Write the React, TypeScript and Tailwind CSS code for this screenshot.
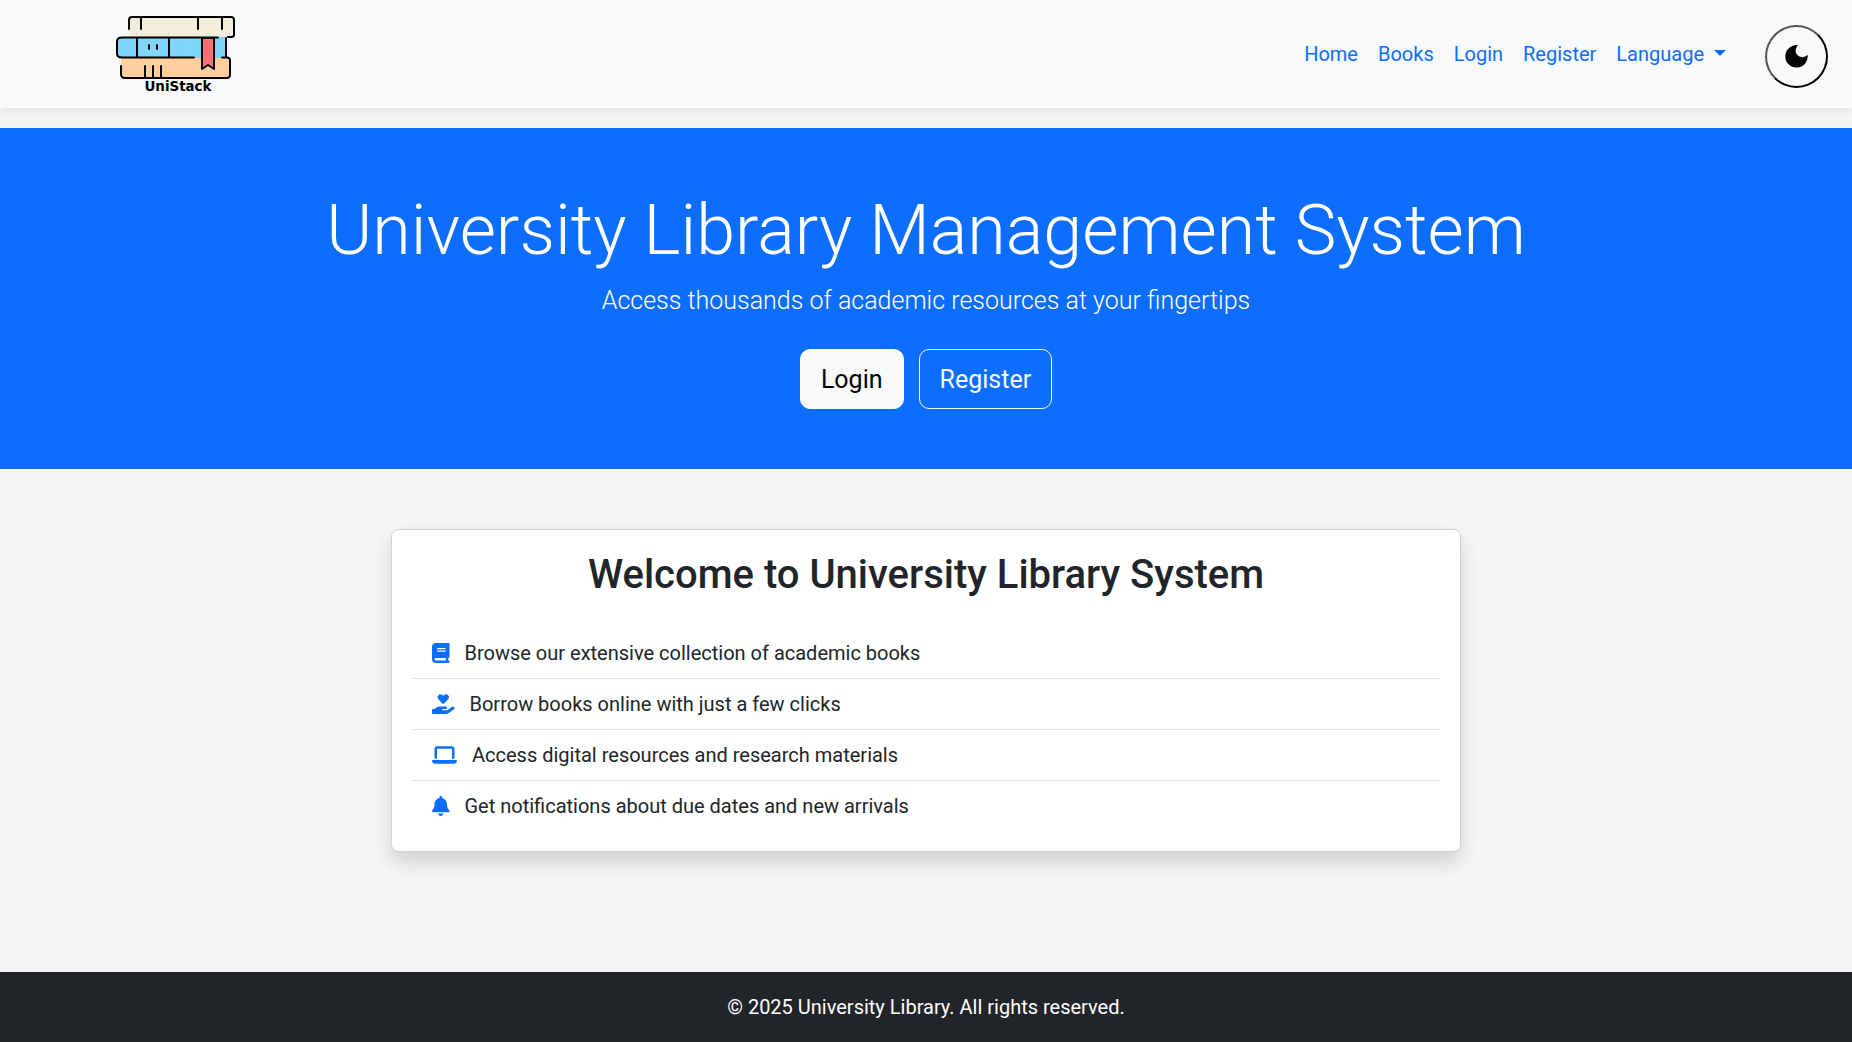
import type { ReactNode } from "react";
import { FaBell, FaBook, FaHandHoldingHeart, FaLaptop } from "react-icons/fa6";

function Logo() {
  return (
    <svg width="120" height="80" viewBox="0 0 120 80" fill="none" stroke="#000" strokeWidth="2" strokeLinecap="round" strokeLinejoin="round">
      <path d="M13 20V7q0-3 3-3h99q3 0 3 3v15q0 2-3 2H13z" fill="#f2eddb" stroke="none" />
      <path d="M4 24h107v21H4q-3-1-3-4V28q0-3 3-4z" fill="#80d5fb" stroke="none" />
      <path d="M5 45h107q2 0 2 3v14q0 3-3 3H9q-4 0-4-4z" fill="#ffcf9f" stroke="none" />
      <path d="M13 16V7q0-3 3-3h99q3 0 3 3v15q0 2-3 2h-3M25 5v11M82 5v11M106 5v11" />
      <path d="M102 24.500H6q-5 0-5 4v12q0 4 5 4h72M21 25v19M53 25v19M110 25v19M33 32v4M41 32v4" />
      <path d="M106 44.500h5q3 0 3 3v14q0 3.500-3.500 3.500H9q-4 0-4-4v-8M29 53v11M37 53v11M45 53v11" />
      <path d="M86 25h12v31l-6-4-6 4z" fill="#ff7074" />
      <text x="28.5" y="78" fill="#000" stroke="none" fontFamily="DejaVu Sans" fontWeight="700" fontSize="13.4">UniStack</text>
    </svg>
  );
}

function Moon() {
  return (
    <svg width="23" height="23" viewBox="0 0 23 23" fill="currentColor">
      <path d="M13 .2A11.200 11.200 0 1 0 22.600 9.700C20 12.600 16 13 13 10.600 9.800 8 9.800 3.600 13 .2z" />
    </svg>
  );
}

const features: { icon: ReactNode; text: string }[] = [
  { icon: <FaBook className="h-5 w-[17.5px]" />, text: "Browse our extensive collection of academic books" },
  { icon: <FaHandHoldingHeart className="h-5 w-[22.5px]" />, text: "Borrow books online with just a few clicks" },
  { icon: <FaLaptop className="h-5 w-[25px]" />, text: "Access digital resources and research materials" },
  { icon: <FaBell className="h-5 w-[17.5px]" />, text: "Get notifications about due dates and new arrivals" },
];

export default function App() {
  return (
    <div className="flex h-[1042px] flex-col bg-[#f5f5f5] font-['Roboto',sans-serif] text-[20px] leading-[30px] text-[#212529]">
      <nav className="mb-5 flex h-[108px] shrink-0 items-center bg-[#f8f9fa] pr-6 pl-[116px] shadow-[0_2px_10px_rgba(0,0,0,0.1)]">
        <a href="#" className="-mt-0.5"><Logo /></a>
        <div className="ml-auto flex gap-5 text-[#0d6efd]">
          <a href="#">Home</a>
          <a href="#">Books</a>
          <a href="#">Login</a>
          <a href="#">Register</a>
          <a href="#" className="flex">
            Language
            <span className="mt-[11px] ml-2.5 h-0 w-0 border-x-[6px] border-t-[6px] border-x-transparent border-t-[#0d6efd]" />
          </a>
        </div>
        <button aria-label="Toggle dark mode" className="mt-1 ml-[39px] flex h-[63px] w-[63px] items-center justify-center rounded-full border-2 [border-style:outset] border-black text-black">
          <Moon />
        </button>
      </nav>

      <header className="flex h-[341px] shrink-0 flex-col items-center bg-[#0d6efd] pt-[60px] text-white">
        <h1 className="mb-2.5 text-[70px] leading-[84px] font-light">University Library Management System</h1>
        <p className="mb-[29.5px] text-[25px] leading-[37.5px] font-light">Access thousands of academic resources at your fingertips</p>
        <div className="flex gap-[15px] text-[25px] leading-[37.5px]">
          <a href="#" className="rounded-[10px] border border-[#f8f9fa] bg-[#f8f9fa] px-5 pt-[11px] pb-[9px] text-black">Login</a>
          <a href="#" className="rounded-[10px] border border-[#f8f9fa] px-5 pt-[11px] pb-[9px] text-[#f8f9fa]">Register</a>
        </div>
      </header>

      <main className="mx-auto mt-[60px] w-[1070px] rounded-[7.5px] border border-[#d2d2d2] bg-white px-5 pt-[21px] pb-5 shadow-[0_10px_20px_rgba(0,0,0,0.15)]">
        <h2 className="mb-[29px] text-center text-[40px] leading-[48px] font-medium">Welcome to University Library System</h2>
        <ul className="divide-y divide-[#dee2e6]">
          {features.map((f) => (
            <li key={f.text} className="flex items-center gap-[15px] px-5 py-2.5 text-[#212529]">
              <span className="-mt-px text-[#0d6efd]">{f.icon}</span>
              {f.text}
            </li>
          ))}
        </ul>
      </main>

      <footer className="mt-auto bg-[#212529] py-5 text-center text-white">© 2025 University Library. All rights reserved.</footer>
    </div>
  );
}
